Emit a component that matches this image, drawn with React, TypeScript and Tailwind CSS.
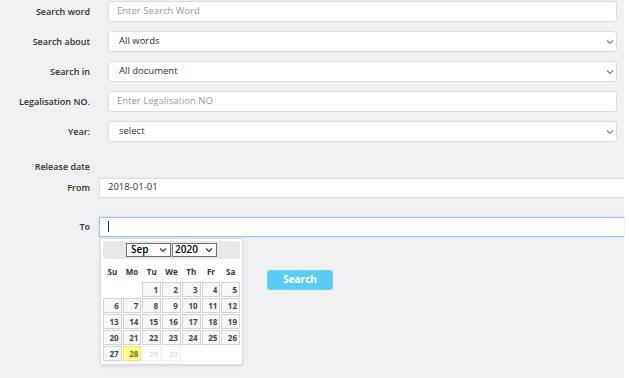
import React from 'react';

const font = { fontFamily: '"Open Sans", "Liberation Sans", sans-serif' };

function Chevron({ className = '' }: { className?: string }) {
  return (
    <svg className={className} width="8" height="6" viewBox="0 0 8 6" fill="none">
      <path d="M1 1.5l3 3 3-3" stroke="currentColor" strokeWidth="1.2" />
    </svg>
  );
}

const labelCls = 'w-[91px] pr-[1px] text-right text-[9px] font-semibold text-[#333]';

function Field({ label, children }: { label: string; children: React.ReactNode }) {
  return (
    <div className="flex items-center h-[21px]">
      <label className={labelCls}>{label}</label>
      <div className="ml-[17px] flex-1">{children}</div>
    </div>
  );
}

function TextBox({ placeholder }: { placeholder: string }) {
  return (
    <div className="h-[21px] w-[509px] bg-white border border-[#dcdcdc] rounded-[3px] flex items-center px-[8px] text-[9.5px] text-[#9a9a9a]">
      {placeholder}
    </div>
  );
}

function SelectBox({ value }: { value: string }) {
  return (
    <div className="h-[21px] w-[509px] bg-white border border-[#dcdcdc] rounded-[3px] flex items-center justify-between pl-[10px] pr-[2px] text-[9.5px] text-[#333]">
      <span>{value}</span>
      <Chevron className="text-[#888]" />
    </div>
  );
}

const weekDays = ['Su', 'Mo', 'Tu', 'We', 'Th', 'Fr', 'Sa'];

function Calendar() {
  const cells: (number | null)[] = [null, null, ...Array.from({ length: 30 }, (_, i) => i + 1)];
  return (
    <div className="w-[143px] bg-white border border-[#dddddd] rounded-[2px] p-[2px] pb-[3px] shadow-sm">
      <div className="h-[18px] bg-[#e8e8e8] rounded-[2px] flex items-center justify-center gap-[1px]">
        <div className="w-[45px] h-[14px] bg-white border border-[#6f6f6f] flex items-center justify-between pl-[4px] pr-[3px] text-[10px] font-semibold text-black">
          <span>Sep</span>
          <Chevron className="text-[#333]" />
        </div>
        <div className="w-[45px] h-[14px] bg-white border border-[#6f6f6f] flex items-center justify-between pl-[2px] pr-[3px] text-[10px] font-semibold text-black">
          <span>2020</span>
          <Chevron className="text-[#333]" />
        </div>
      </div>
      <div className="grid grid-cols-7 gap-x-[1px] mt-[3px] h-[20px] items-center">
        {weekDays.map((d) => (
          <div key={d} className="text-center text-[8px] font-bold text-[#333]">{d}</div>
        ))}
      </div>
      <div className="grid grid-cols-7 gap-[1px]">
        {cells.map((n, i) => {
          if (n === null) return <div key={i} className="h-[15px]" />;
          const today = n === 28;
          const disabled = n > 28;
          return (
            <div
              key={i}
              className={
                'h-[15px] border text-right pr-[2px] text-[8px] font-bold leading-[13px] ' +
                (today
                  ? 'bg-[#fffa8c] border-[#f0e97a] text-[#777620]'
                  : disabled
                  ? 'bg-white border-[#f0f0f0] text-[#cfcfcf] font-normal'
                  : 'bg-[#f6f6f6] border-[#d3d3d3] text-[#454545]')
              }
            >
              {n}
            </div>
          );
        })}
      </div>
    </div>
  );
}

export default function App() {
  return (
    <div className="w-[629px] h-[378px] bg-white overflow-hidden" style={font}>
      <div className="w-[624px] h-full bg-[#f0f0f2] pt-[1px]">
        <div className="flex flex-col gap-[9px]">
          <Field label="Search word"><TextBox placeholder="Enter Search Word" /></Field>
          <Field label="Search about"><SelectBox value="All words" /></Field>
          <Field label="Search in"><SelectBox value="All document" /></Field>
          <Field label="Legalisation NO."><TextBox placeholder="Enter Legalisation NO" /></Field>
          <Field label="Year:"><SelectBox value="select" /></Field>
        </div>

        <div className={'mt-[18px] ' + labelCls}>Release date</div>

        <div className="flex items-center mt-[4px] h-[20px]">
          <label className={labelCls}>From</label>
          <div className="ml-[8px] flex-1 h-[20px] bg-white border-y border-l border-[#dcdcdc] flex items-center pl-[8px] text-[9.5px] text-[#333]">
            2018-01-01
          </div>
        </div>

        <div className="flex items-center mt-[19px] h-[20px]">
          <label className={labelCls}>To</label>
          <div className="ml-[8px] flex-1 h-[20px] bg-white border-y border-l border-[#9fc4e2] shadow-[0_0_2px_#b9d6ee] flex items-center pl-[8px]">
            <div className="w-px h-[11px] bg-[#333]" />
          </div>
        </div>

        <div className="flex items-start ml-[100px] mt-[1px]">
          <Calendar />
          <button className="ml-[24px] mt-[32px] w-[66px] h-[20px] rounded-[3px] bg-[#5ccbf2] border border-[#6fd0f3] text-white text-[10px] font-bold">
            Search
          </button>
        </div>
      </div>
    </div>
  );
}
